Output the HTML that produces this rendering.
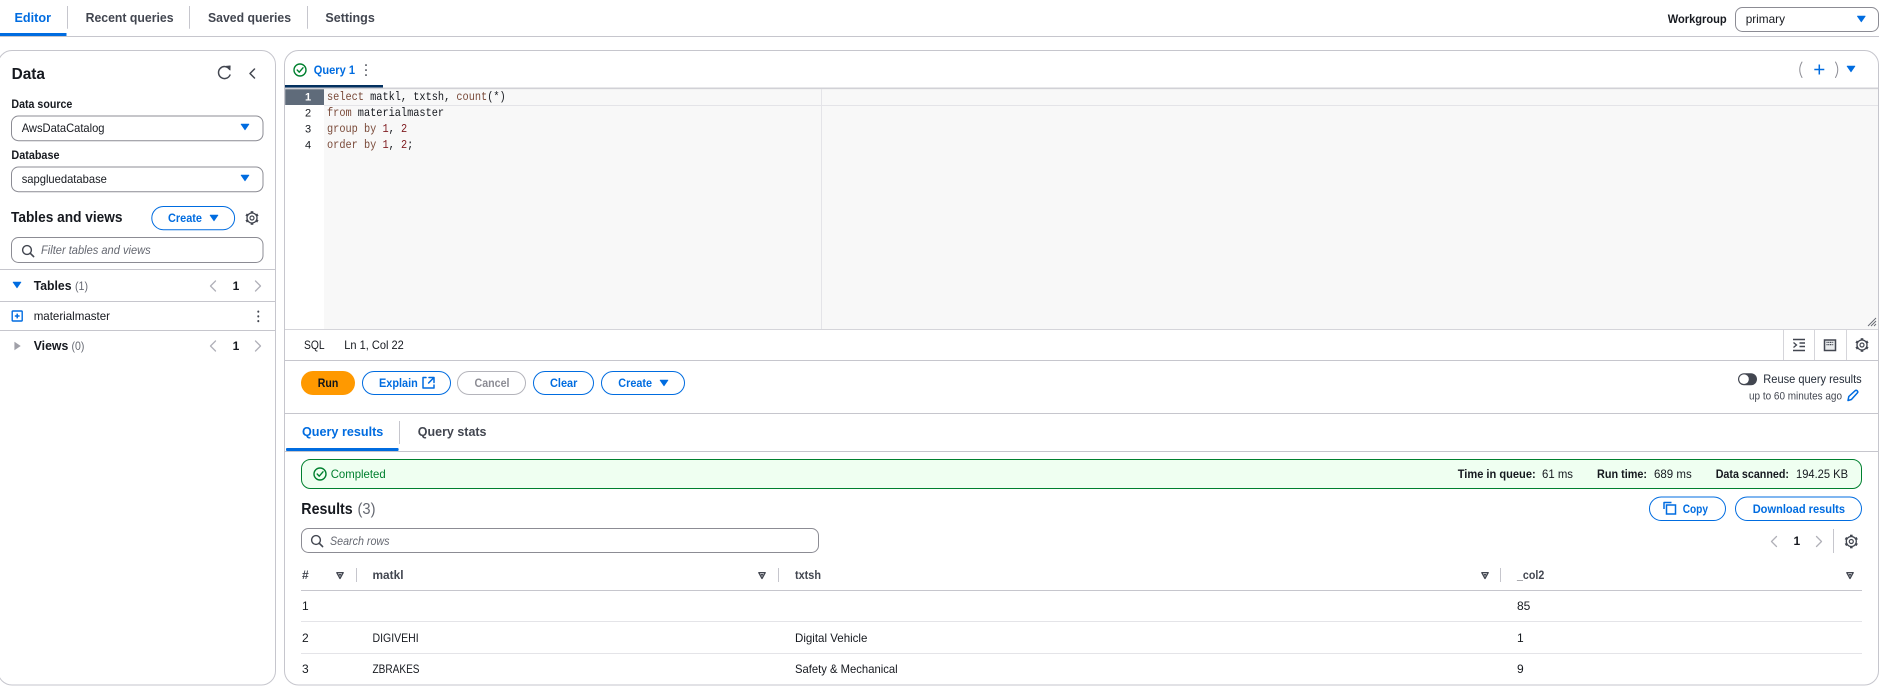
<!DOCTYPE html>
<html lang="en"><head><meta charset="utf-8"><title>Athena Query Editor</title>
<style>
html,body{margin:0;padding:0;background:#fff;width:1890px;height:696px;overflow:hidden}
svg{display:block}
text{font-family:"Liberation Sans",sans-serif;font-size:12px;fill:#16191f;white-space:pre}
.b{font-weight:700}
.tab{font-size:12.5px;font-weight:700;fill:#424650}
.blue{fill:#006ce0}
.btn{font-size:12px;font-weight:700;fill:#006ce0}
.g{fill:#656871}
.ph{font-style:italic;fill:#656871;font-size:12px}
.h{font-weight:700;fill:#424650;font-size:12px}
.mono{font-family:"Liberation Mono",monospace;font-size:12px}
.kw{fill:#794938}.num{fill:#811f24}.id{fill:#16191f}
.ln{fill:none;stroke:#c6c6cd;stroke-width:1}
.lt{fill:none;stroke:#e4e4e8;stroke-width:1}
.ic{fill:none;stroke:#424650;stroke-width:1.5;stroke-linecap:round;stroke-linejoin:round}
.icb{fill:none;stroke:#006ce0;stroke-width:1.5;stroke-linecap:round;stroke-linejoin:round}
.pg{fill:none;stroke:#b0b0b8;stroke-width:1.3;stroke-linecap:round;stroke-linejoin:round}
.sel{fill:#fff;stroke:#8c8c94;stroke-width:1}
.bt{fill:#fff;stroke:#006ce0;stroke-width:1}
</style></head><body>
<svg width="1890" height="696" viewBox="0 0 1890 696" xmlns="http://www.w3.org/2000/svg">
<defs>
<g id="gear">
<g fill="#424650">
<rect x="-1.3" y="-6.8" width="2.6" height="2.4"/>
<rect x="-1.3" y="4.4" width="2.6" height="2.4"/>
<rect x="-1.3" y="-6.8" width="2.6" height="2.4" transform="rotate(60)"/>
<rect x="-1.3" y="4.4" width="2.6" height="2.4" transform="rotate(60)"/>
<rect x="-1.3" y="-6.8" width="2.6" height="2.4" transform="rotate(120)"/>
<rect x="-1.3" y="4.4" width="2.6" height="2.4" transform="rotate(120)"/>
</g>
<circle r="5" fill="#fff" stroke="#424650" stroke-width="1.3"/>
<circle r="2" fill="#fff" stroke="#424650" stroke-width="1.2"/>
</g>
<g id="srch"><circle cx="-1" cy="-1" r="4.4" fill="none" stroke="#424650" stroke-width="1.4"/><path d="M2.3 2.3 L5.6 5.6" stroke="#424650" stroke-width="1.6" stroke-linecap="round"/></g>
<g id="check"><circle r="6" fill="none" stroke="#00802f" stroke-width="1.4"/><path d="M-2.8 0 L-0.8 2.2 L3 -2.2" fill="none" stroke="#00802f" stroke-width="1.4" stroke-linecap="round" stroke-linejoin="round"/></g>
<path id="caret" d="M-3.9 -2.8 H3.9 L0 2.8 Z" fill="#006ce0" stroke="#006ce0" stroke-width=".8" stroke-linejoin="round"/>
<g id="sort"><path d="M-3.2 -2.8 H3.2 L0 3 Z" fill="#fff" stroke="#424650" stroke-width="1.3" stroke-linejoin="round"/><path d="M-1.4 -1.5 H1.4 L0 1 Z" fill="#424650"/></g>
</defs>

<!-- top tabs -->
<text class="tab blue" x="14.5" y="22" textLength="36.5" lengthAdjust="spacingAndGlyphs">Editor</text>
<text class="tab" x="85.6" y="22" textLength="88" lengthAdjust="spacingAndGlyphs">Recent queries</text>
<text class="tab" x="208" y="22" textLength="83" lengthAdjust="spacingAndGlyphs">Saved queries</text>
<text class="tab" x="325.4" y="22" textLength="49.4" lengthAdjust="spacingAndGlyphs">Settings</text>
<path class="ln" d="M67.5 6V28.7M189.5 6V28.7M307.5 6V28.7"/>
<rect x="0" y="33" width="66.5" height="3" fill="#006ce0"/>
<path class="ln" d="M0 36.5H1879"/>
<text class="b" x="1667.7" y="23" textLength="59" lengthAdjust="spacingAndGlyphs">Workgroup</text>
<rect class="sel" x="1735.5" y="7.5" width="143" height="24" rx="7"/>
<text x="1745.7" y="23" textLength="39.3" lengthAdjust="spacingAndGlyphs">primary</text>
<use href="#caret" x="1861.3" y="19"/>

<!-- left panel -->
<rect class="ln" x="-2" y="50.5" width="277.5" height="634.5" rx="14"/>
<text class="b" x="11.6" y="79" style="font-size:15.5px" textLength="33.4" lengthAdjust="spacingAndGlyphs">Data</text>
<path class="ic" d="M229.5 69.2A6 6 0 1 0 230 75"/><path d="M226 66.2 L230.3 65.8 L230.1 70.2 Z" fill="#424650" stroke="#424650" stroke-width=".6" stroke-linejoin="round"/>
<path class="ic" d="M254.5 69L250 73.5L254.5 78"/>
<text class="b" x="11.4" y="108" textLength="60.9" lengthAdjust="spacingAndGlyphs">Data source</text>
<rect class="sel" x="11.5" y="116" width="251.5" height="24.7" rx="7"/>
<text x="21.7" y="132" textLength="82.8" lengthAdjust="spacingAndGlyphs">AwsDataCatalog</text>
<use href="#caret" x="245" y="127"/>
<text class="b" x="11.4" y="159" textLength="48.1" lengthAdjust="spacingAndGlyphs">Database</text>
<rect class="sel" x="11.5" y="167" width="251.5" height="24.7" rx="7"/>
<text x="21.7" y="183" textLength="85.2" lengthAdjust="spacingAndGlyphs">sapgluedatabase</text>
<use href="#caret" x="245" y="178"/>
<text class="b" x="11" y="222" style="font-size:14.5px" textLength="111.5" lengthAdjust="spacingAndGlyphs">Tables and views</text>
<rect class="bt" x="151.8" y="206.5" width="82.8" height="23.2" rx="11.6"/>
<text class="btn" x="168" y="222" textLength="34" lengthAdjust="spacingAndGlyphs">Create</text>
<use href="#caret" x="214" y="218"/>
<use href="#gear" x="252" y="218"/>
<rect class="sel" x="11.5" y="237.5" width="251.5" height="25" rx="7"/>
<use href="#srch" x="28" y="251"/>
<text class="ph" x="41" y="254" textLength="109.7" lengthAdjust="spacingAndGlyphs">Filter tables and views</text>
<path class="ln" d="M0 269.5H275M0 301.5H275M0 330.5H275"/>
<use href="#caret" x="17" y="285"/>
<text class="b" x="33.7" y="290" style="font-size:13px" textLength="37.8" lengthAdjust="spacingAndGlyphs">Tables</text>
<text class="g" x="75" y="290" textLength="13" lengthAdjust="spacingAndGlyphs">(1)</text>
<path class="pg" d="M215.5 281L210.5 286L215.5 291"/>
<text class="b" x="232.6" y="290">1</text>
<path class="pg" d="M255.5 281L260.5 286L255.5 291"/>
<rect x="12.2" y="311" width="10" height="10" fill="#fff" stroke="#006ce0" stroke-width="1.4" rx=".8"/>
<path d="M14.8 316H19.6M17.2 313.6V318.4" stroke="#006ce0" stroke-width="1.5"/>
<text x="33.7" y="320" textLength="76.3" lengthAdjust="spacingAndGlyphs">materialmaster</text>
<path d="M258.3 311.5v.2M258.3 316.3v.2M258.3 321v.2" stroke="#424650" stroke-width="2" stroke-linecap="round"/>
<path d="M14.8 342.5L20 346L14.8 349.5Z" fill="#a0a0a8" stroke="#a0a0a8" stroke-width=".8"/>
<text class="b" x="33.7" y="350" style="font-size:13px" textLength="34.6" lengthAdjust="spacingAndGlyphs">Views</text>
<text class="g" x="71.5" y="350" textLength="12.9" lengthAdjust="spacingAndGlyphs">(0)</text>
<path class="pg" d="M215.5 341L210.5 346L215.5 351"/>
<text class="b" x="232.6" y="350">1</text>
<path class="pg" d="M255.5 341L260.5 346L255.5 351"/>

<!-- main panel -->
<rect class="ln" x="284.5" y="50.5" width="1594" height="634.5" rx="14"/>
<use href="#check" x="300" y="70"/>
<text class="b blue" x="313.8" y="74" textLength="41.2" lengthAdjust="spacingAndGlyphs">Query 1</text>
<path d="M366 65v.2M366 70v.2M366 75v.2" stroke="#424650" stroke-width="1.7" stroke-linecap="round"/>
<path class="pg" style="stroke:#8c8c94;stroke-width:1" d="M1802 62Q1797.5 69.5 1802 77.5M1835.5 62Q1840 69.5 1835.5 77.5"/>
<path d="M1814.3 69.5H1824.3M1819.3 64.5V74.5" stroke="#006ce0" stroke-width="1.5"/>
<use href="#caret" x="1851" y="69"/>
<rect x="285" y="85" width="98" height="2.5" fill="#033160"/>
<rect x="285" y="87.5" width="1593" height="1.8" fill="#d1d1d6"/>

<!-- editor -->
<rect x="324" y="89.3" width="1554" height="240" fill="#f8f8f8"/>
<rect x="285.2" y="89.3" width="38.8" height="15.7" fill="#5f6b7a"/>
<path class="lt" d="M324 105.5H1878"/>
<path class="lt" d="M821.5 89V329"/>
<text class="b" x="305" y="100.3" style="fill:#fff;font-size:11px">1</text>
<text x="305" y="116.3" style="font-size:11px">2</text>
<text x="305" y="132.3" style="font-size:11px">3</text>
<text x="305" y="148.3" style="font-size:11px">4</text>
<g transform="translate(327 0) scale(.857 1)">
<text class="mono" x="0" y="100"><tspan class="kw">select</tspan><tspan class="id"> matkl, txtsh, </tspan><tspan class="kw">count</tspan><tspan class="id">(*)</tspan></text>
<text class="mono" x="0" y="116"><tspan class="kw">from</tspan><tspan class="id"> materialmaster</tspan></text>
<text class="mono" x="0" y="132"><tspan class="kw">group by</tspan><tspan class="id"> </tspan><tspan class="num">1</tspan><tspan class="id">, </tspan><tspan class="num">2</tspan></text>
<text class="mono" x="0" y="148"><tspan class="kw">order by</tspan><tspan class="id"> </tspan><tspan class="num">1</tspan><tspan class="id">, </tspan><tspan class="num">2</tspan><tspan class="id">;</tspan></text>
</g>
<path d="M1868 326L1876 318M1871 326L1876 321M1874 326L1876 324" stroke="#656871" stroke-width=".9"/>
<path class="lt" style="stroke:#d5d5da" d="M285 329.5H1878"/>
<text x="304" y="349" textLength="20.6" lengthAdjust="spacingAndGlyphs">SQL</text>
<text x="344.3" y="349" textLength="59.5" lengthAdjust="spacingAndGlyphs">Ln 1, Col 22</text>
<path class="lt" style="stroke:#d5d5da" d="M1783.5 330V360M1814.5 330V360M1846.5 330V360"/>
<path d="M1793 339.5H1805M1799.5 343H1805M1799.5 346.5H1805M1793 350.5H1805" stroke="#424650" stroke-width="1.4"/>
<path d="M1793.5 342.5L1796.5 345L1793.5 347.5" fill="none" stroke="#424650" stroke-width="1.3"/>
<rect x="1824.5" y="340" width="11" height="10.5" fill="#e9ebed" stroke="#424650" stroke-width="1.5"/>
<path d="M1826.5 342.4H1833.5M1826.5 344.6H1833.5" stroke="#424650" stroke-width="1.2" stroke-dasharray="1.1 .6"/>
<use href="#gear" x="1862" y="345"/>
<path class="ln" d="M285 360.5H1878"/>

<!-- action buttons -->
<rect x="301" y="371" width="54" height="24" rx="12" fill="#ff9900"/>
<text class="btn" style="fill:#0f141a" x="317.8" y="387" textLength="20.5" lengthAdjust="spacingAndGlyphs">Run</text>
<rect class="bt" x="362.5" y="371.5" width="88" height="23" rx="11.5"/>
<text class="btn" x="379" y="387" textLength="38.8" lengthAdjust="spacingAndGlyphs">Explain</text>
<path class="icb" d="M426 377.5H423V388H434V385M429 377.5H434V382.5M433.5 378L428.6 383"/>
<rect x="457.5" y="371.5" width="68" height="23" rx="11.5" fill="#fff" stroke="#b4b4bb" stroke-width="1"/>
<text class="btn" style="fill:#8c8c94" x="474.5" y="387" textLength="35" lengthAdjust="spacingAndGlyphs">Cancel</text>
<rect class="bt" x="533.5" y="371.5" width="60" height="23" rx="11.5"/>
<text class="btn" x="550" y="387" textLength="27.4" lengthAdjust="spacingAndGlyphs">Clear</text>
<rect class="bt" x="601.5" y="371.5" width="83" height="23" rx="11.5"/>
<text class="btn" x="618.3" y="387" textLength="33.7" lengthAdjust="spacingAndGlyphs">Create</text>
<use href="#caret" x="664" y="383"/>
<rect x="1738" y="373.2" width="19" height="12" rx="6" fill="#424650"/>
<circle cx="1744" cy="379.2" r="4.8" fill="#fff"/>
<text x="1763.3" y="383" textLength="98.4" lengthAdjust="spacingAndGlyphs" style="fill:#232b37">Reuse query results</text>
<text x="1749" y="399.5" style="font-size:11px;fill:#424650" textLength="93" lengthAdjust="spacingAndGlyphs">up to 60 minutes ago</text>
<path class="icb" d="M1848 400.5L1848.8 396.5L1855 390.8Q1856.3 389.8 1857.3 390.8Q1858.3 392 1857.3 393L1851.4 399.5Z"/>
<path class="ln" d="M285 413.5H1878"/>

<!-- results tabs -->
<text class="tab blue" x="302" y="436" textLength="81.3" lengthAdjust="spacingAndGlyphs">Query results</text>
<text class="tab" x="417.8" y="436" textLength="68.7" lengthAdjust="spacingAndGlyphs">Query stats</text>
<path class="ln" d="M399.5 421V444"/>
<rect x="286" y="448" width="112.6" height="3" rx="1" fill="#006ce0"/>
<path class="ln" d="M285 451.5H1878"/>

<!-- status -->
<rect x="301.5" y="459.5" width="1560" height="29" rx="9" fill="#effff1" stroke="#00802f" stroke-width="1"/>
<use href="#check" x="320" y="474"/>
<text x="330.7" y="478" style="fill:#00802f" textLength="55" lengthAdjust="spacingAndGlyphs">Completed</text>
<text class="b" x="1457.7" y="478" textLength="78" lengthAdjust="spacingAndGlyphs">Time in queue:</text>
<text x="1542" y="478" textLength="31" lengthAdjust="spacingAndGlyphs">61 ms</text>
<text class="b" x="1597" y="478" textLength="50" lengthAdjust="spacingAndGlyphs">Run time:</text>
<text x="1654" y="478" textLength="37.7" lengthAdjust="spacingAndGlyphs">689 ms</text>
<text class="b" x="1715.7" y="478" textLength="73.3" lengthAdjust="spacingAndGlyphs">Data scanned:</text>
<text x="1796" y="478" textLength="52" lengthAdjust="spacingAndGlyphs">194.25 KB</text>

<!-- results header -->
<text class="b" x="301.3" y="514" style="font-size:15.5px" textLength="51.4" lengthAdjust="spacingAndGlyphs">Results</text>
<text class="g" x="357.5" y="514" style="font-size:15.5px" textLength="18" lengthAdjust="spacingAndGlyphs">(3)</text>
<rect class="bt" x="1649.5" y="497" width="76" height="23.5" rx="11.7"/>
<path class="icb" d="M1664 509V502.5H1671.5" style="stroke-linecap:butt"/>
<rect x="1666.5" y="505" width="9" height="9" fill="none" stroke="#006ce0" stroke-width="1.5"/>
<text class="btn" x="1682.7" y="513" textLength="25.3" lengthAdjust="spacingAndGlyphs">Copy</text>
<rect class="bt" x="1735.5" y="497" width="126" height="23.5" rx="11.7"/>
<text class="btn" x="1752.7" y="513" textLength="92.3" lengthAdjust="spacingAndGlyphs">Download results</text>
<rect class="sel" x="301.5" y="528.5" width="517" height="24" rx="7"/>
<use href="#srch" x="317" y="541"/>
<text class="ph" x="330" y="545" textLength="59.5" lengthAdjust="spacingAndGlyphs">Search rows</text>
<path class="pg" d="M1776.5 536.5L1771.5 541.5L1776.5 546.5"/>
<text class="b" x="1793.5" y="545">1</text>
<path class="pg" d="M1816.5 536.5L1821.5 541.5L1816.5 546.5"/>
<path class="ln" d="M1833.5 529V553"/>
<use href="#gear" x="1851.3" y="541.5"/>

<!-- table -->
<text class="h" x="302" y="579">#</text>
<use href="#sort" x="340" y="575.5"/>
<path class="ln" d="M356.5 568V582"/>
<text class="h" x="372.5" y="579" textLength="31" lengthAdjust="spacingAndGlyphs">matkl</text>
<use href="#sort" x="762" y="575.5"/>
<path class="ln" d="M778.5 568V582"/>
<text class="h" x="795" y="579" textLength="26" lengthAdjust="spacingAndGlyphs">txtsh</text>
<use href="#sort" x="1485" y="575.5"/>
<path class="ln" d="M1500.5 568V582"/>
<text class="h" x="1517" y="579" textLength="27.3" lengthAdjust="spacingAndGlyphs">_col2</text>
<use href="#sort" x="1850" y="575.5"/>
<path class="ln" d="M301 590.5H1862"/>
<path class="lt" d="M301 621.5H1862M301 653.5H1862"/>
<text x="302" y="610">1</text>
<text x="1517" y="610">85</text>
<text x="302" y="642">2</text>
<text x="372.5" y="642" textLength="46.2" lengthAdjust="spacingAndGlyphs">DIGIVEHI</text>
<text x="795" y="642" textLength="72.4" lengthAdjust="spacingAndGlyphs">Digital Vehicle</text>
<text x="1517" y="642">1</text>
<text x="302" y="673">3</text>
<text x="372.5" y="673" textLength="47" lengthAdjust="spacingAndGlyphs">ZBRAKES</text>
<text x="795" y="673" textLength="102.6" lengthAdjust="spacingAndGlyphs">Safety &amp; Mechanical</text>
<text x="1517" y="673">9</text>
</svg>
</body></html>
